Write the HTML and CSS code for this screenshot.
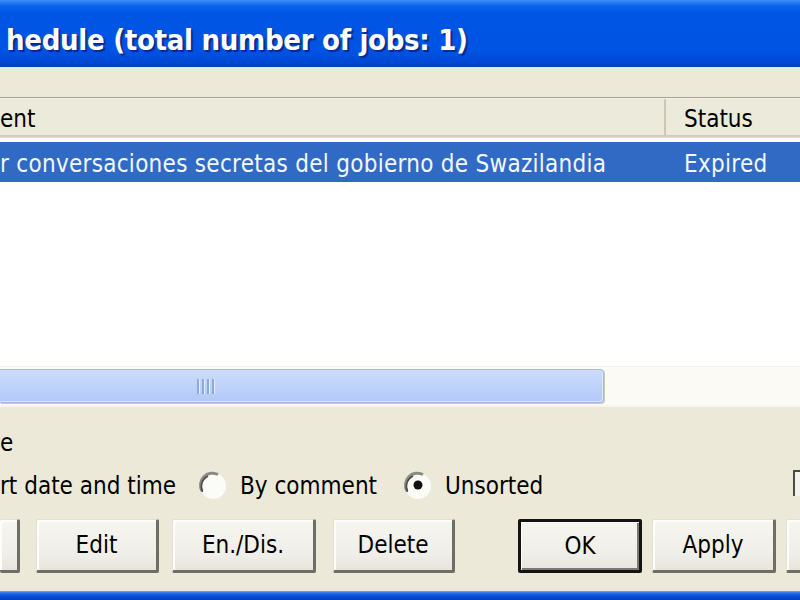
FILE: index.html
```html
<!DOCTYPE html>
<html>
<head>
<meta charset="utf-8">
<link rel="stylesheet" href="styles.css">
</head>
<body>
<div class="window">
  <div class="titlebar"><span class="title">hedule (total number of jobs: 1)</span></div>
  <div class="client">
    <div class="list">
      <div class="header">
        <div class="col col-comment">ent</div>
        <div class="col col-status">Status</div>
      </div>
      <div class="rows">
        <div class="row selected">
          <div class="cell cell-comment">r conversaciones secretas del gobierno de Swazilandia</div>
          <div class="cell cell-status">Expired</div>
        </div>
      </div>
      <div class="hscroll">
        <div class="thumb"><span class="grip"><i></i><i></i><i></i><i></i></span></div>
        <div class="track"></div>
      </div>
    </div>
    <div class="sortgroup">
      <div class="grouplabel">e</div>
      <div class="radios">
        <span class="rlabel first">rt date and time</span>
        <span class="radio"><svg width="30" height="30" viewBox="0 0 30 30"><circle cx="15" cy="15" r="13" fill="#fbfbf8"/><path d="M4 20 A12 12 0 0 1 20 3.5" fill="none" stroke="#8a8a84" stroke-width="3"/><path d="M4.5 21 A12 12 0 0 1 10 5" fill="none" stroke="#4a4a44" stroke-width="1.5"/></svg></span>
        <span class="rlabel">By comment</span>
        <span class="radio"><svg width="30" height="30" viewBox="0 0 30 30"><circle cx="15" cy="15" r="13" fill="#fbfbf8"/><path d="M4 20 A12 12 0 0 1 20 3.5" fill="none" stroke="#8a8a84" stroke-width="3"/><path d="M4.5 21 A12 12 0 0 1 10 5" fill="none" stroke="#4a4a44" stroke-width="1.5"/><circle cx="15" cy="14" r="4.5" fill="#111"/></svg></span>
        <span class="rlabel">Unsorted</span>
        <span class="spacer"></span>
        <span class="checkbox"></span>
      </div>
    </div>
    <div class="buttons">
      <button class="btn b-first"></button>
      <button class="btn b-edit">Edit</button>
      <button class="btn b-endis">En./Dis.</button>
      <button class="btn b-delete">Delete</button>
      <button class="btn default b-ok">OK</button>
      <button class="btn b-apply">Apply</button>
      <button class="btn b-last"></button>
    </div>
  </div>
  <div class="bottomframe"></div>
</div>
</body>
</html>
```

FILE: styles.css
```css
html, body {
  margin: 0;
  padding: 0;
}
body {
  width: 800px;
  height: 600px;
  overflow: hidden;
  background: #ece9d8;
  font-family: "DejaVu Sans", sans-serif;
  font-stretch: condensed;
  font-size: 24px;
  color: #000;
}
.window {
  display: flex;
  flex-direction: column;
  height: 600px;
}
.titlebar {
  height: 67px;
  flex: none;
  background: linear-gradient(to bottom, #3c8ff7 0px, #0a63ec 6px, #0055e5 14px, #0054e3 50px, #0049d6 62px, #003fbf 67px);
  display: flex;
  align-items: center;
  overflow: hidden;
}
.title {
  color: #fff;
  font-weight: bold;
  font-size: 29px;
  white-space: nowrap;
  margin-left: 6px;
  margin-top: 12px;
  text-shadow: 2px 2px 1px #0a2a8a;
  letter-spacing: -0.3px;
}
.client {
  flex: 1;
  display: flex;
  flex-direction: column;
  padding-top: 30px;
}
.list {
  height: 309px;
  display: flex;
  flex-direction: column;
  background: #fff;
  border-top: 1px solid #a7a596;
}
.header {
  height: 36px;
  display: flex;
  background: #ebeadb;
  border-top: 1px solid #f4f3ea;
  border-bottom: 2px solid #d0cdbb;
  box-shadow: 0 1px 0 #e2dfcf;
}
.col {
  display: flex;
  align-items: center;
  white-space: nowrap;
  overflow: hidden;
  padding-top: 4px;
}
.col-comment {
  width: 664px;
  border-right: 2px solid #cbc7b4;
}
.col-status {
  flex: 1;
  padding-left: 18px;
}
.rows {
  flex: 1;
  padding-top: 5px;
}
.row {
  height: 40px;
  display: flex;
  align-items: center;
}
.row.selected {
  background: #316ac5;
  color: #f4f8ff;
}
.cell {
  white-space: nowrap;
  overflow: hidden;
  padding-top: 4px;
}
.cell-comment {
  width: 666px;
  letter-spacing: 0.28px;
}
.cell-status {
  padding-left: 18px;
  letter-spacing: 0.3px;
}
.hscroll {
  height: 38px;
  display: flex;
  align-items: center;
  background: #fbfaf5;
  border-top: 1px solid #f2f1ea;
  border-bottom: 2px solid #f6f5ee;
}
.thumb {
  width: 604px;
  height: 34px;
  box-sizing: border-box;
  background: linear-gradient(to bottom, #cddcfd, #bcd0fb 60%, #b3c8f6);
  border: 1px solid #a6b9e6;
  border-left: none;
  border-radius: 0 4px 4px 0;
  box-shadow: inset -1px -1px 0 #dbe6fe, 1px 1px 0 #c9c9c2;
  display: flex;
  align-items: center;
}
.grip {
  margin-left: 197px;
  display: flex;
  gap: 2px;
}
.grip i {
  display: block;
  width: 2px;
  height: 15px;
  background: #8ea7dd;
  border-right: 1px solid #e6eeff;
}
.track {
  flex: 1;
}
.sortgroup {
  padding-top: 21px;
}
.grouplabel {
  height: 30px;
  line-height: 30px;
}
.radios {
  display: flex;
  align-items: center;
  height: 34px;
  margin-top: 11px;
}
.rlabel {
  white-space: nowrap;
}
.rlabel.first {
  margin-right: 22px;
}
.radio {
  display: flex;
  margin-right: 12px;
}
.radio + .rlabel {
  margin-right: 26px;
}
.spacer {
  flex: 1;
}
.checkbox {
  align-self: flex-start;
  width: 20px;
  height: 26px;
  margin-top: 1px;
  margin-right: -13px;
  border-left: 2px solid #4b4b46;
  border-top: 2px solid #4b4b46;
  box-sizing: border-box;
  background: #f3f2ec;
}
.buttons {
  display: flex;
  margin-top: 16px;
  height: 54px;
}
.btn {
  font-family: inherit;
  font-stretch: condensed;
  font-size: 24px;
  height: 54px;
  padding: 0;
  box-sizing: border-box;
  background: linear-gradient(to bottom, #f6f5f0, #efeee8 70%, #e6e4da);
  border: 1px solid #e3e1d4;
  border-right: 3px solid #706e64;
  border-bottom: 3px solid #706e64;
  box-shadow: inset 2px 2px 0 #fdfdfb;
  border-radius: 2px;
  color: #000;
  flex: none;
}
.btn.default {
  border: 3px solid #141410;
  box-shadow: inset 1px 1px 0 #fff, inset -2px -2px 0 #7c7a70;
}
.b-first { width: 20px; border-left: none; }
.b-edit { width: 123px; margin-left: 16px; }
.b-endis { width: 144px; margin-left: 13px; }
.b-delete { width: 122px; margin-left: 17px; }
.b-ok { width: 124px; margin-left: 63px; }
.b-apply { width: 124px; margin-left: 10px; }
.b-last { width: 40px; margin-left: 10px; }
.bottomframe {
  height: 9px;
  flex: none;
  background: linear-gradient(to bottom, #7aa6f6 0px, #2a6de8 2px, #0a4fdc 5px, #0040c0 9px);
}
```
